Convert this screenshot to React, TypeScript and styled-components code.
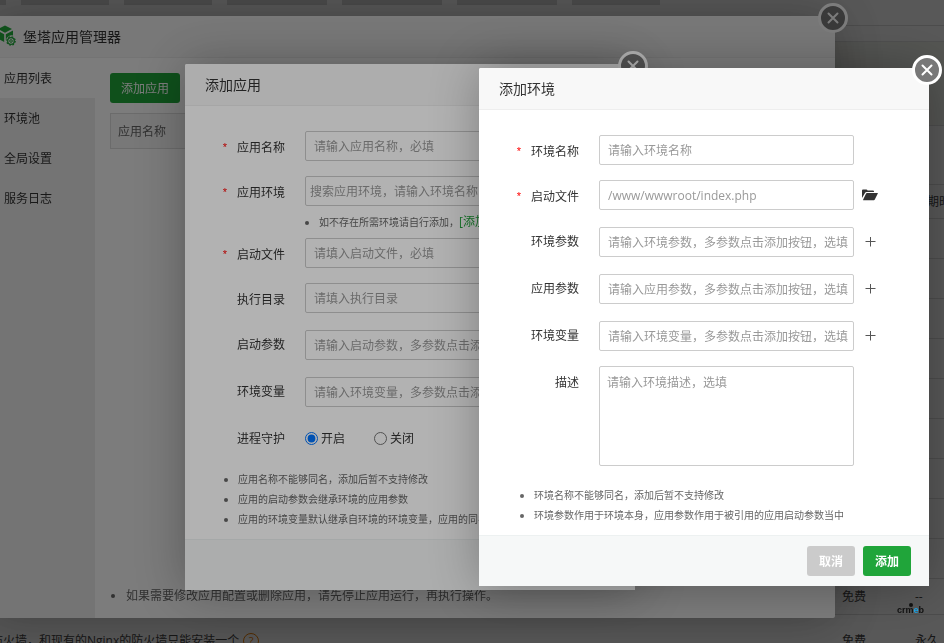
import React from "react";
import styled, { createGlobalStyle, css } from "styled-components";

const Global = createGlobalStyle`
  *, *::before, *::after { box-sizing: border-box; }
  html, body { margin: 0; height: 100%; overflow: hidden; }
  body, button, input, textarea {
    font-family: "Open Sans", "Noto Sans CJK SC", sans-serif;
    font-size: 12px;
  }
  body { color: #333; background: #fff; }
  #root { height: 100%; }
  ul, h2, p { margin: 0; padding: 0; }
`;

/* ---------- software store page, under every dialog ---------- */

const Page = styled.main`
  height: 100vh;
  overflow: hidden;
  display: flex;
  flex-direction: column;
`;

const Tabs = styled.nav`
  display: flex;
  gap: 15px;
  height: 26px;
  flex: none;
  border-bottom: 1px solid #ddd;
`;

const TabStub = styled.span<{ $w: number }>`
  width: ${(p) => p.$w}px;
  height: 5px;
  background: #d8d8d8;
`;

const Gap = styled.div`
  height: 16px;
  flex: none;
  border-bottom: 1px solid #e4e4e4;
`;

const Notice = styled.div`
  height: 84px;
  flex: none;
  background: #f3f5ee;
  border-bottom: 1px solid #ddd;
`;

const Store = styled.table`
  flex: none;
  width: calc(100% + 9px);
  border-collapse: collapse;
  table-layout: fixed;
  margin: 58px 0 0 -9px;
  border-top: 1px solid #ddd;
`;

const StoreRow = styled.tr<{ $h: number }>`
  height: ${(p) => p.$h}px;
  border-bottom: 1px solid #ddd;
`;

const StoreCell = styled.td<{ $w?: number }>`
  padding: 0;
  line-height: 18px;
  color: #444;
  white-space: nowrap;
  ${(p) => p.$w && css`width: ${p.$w}px;`}
`;

const Help = styled.a`
  display: inline-block;
  width: 16px;
  height: 16px;
  margin-left: 4px;
  border: 1px solid #f08000;
  border-radius: 50%;
  color: #f08000;
  font-size: 11px;
  line-height: 14px;
  text-align: center;
  text-decoration: none;
`;

/* ---------- dialogs ---------- */

const Shade = styled.div`
  position: fixed;
  inset: 0;
  background: rgba(0, 0, 0, 0.3);
  overflow: hidden;
`;

const Dialog = styled.section<{ $x: number; $y: number; $w: number }>`
  position: absolute;
  left: ${(p) => p.$x}px;
  top: ${(p) => p.$y}px;
  width: ${(p) => p.$w}px;
  background: #fff;
  border-radius: 2px;
  box-shadow: 1px 1px 50px rgba(0, 0, 0, 0.3);
`;

const DialogTitle = styled.h2<{ $icon?: boolean }>`
  display: flex;
  align-items: center;
  gap: 7px;
  height: 42px;
  padding: 0 20px 2px ${(p) => (p.$icon ? 9 : 20)}px;
  border-bottom: 1px solid #eee;
  border-radius: 2px 2px 0 0;
  background: #f8f8f8;
  font-size: 14px;
  font-weight: 400;
  color: #333;
`;

const CloseButton = styled.button`
  position: absolute;
  top: -13px;
  right: -13px;
  width: 30px;
  height: 30px;
  padding: 0;
  display: grid;
  place-items: center;
  border: 3px solid #fff;
  border-radius: 50%;
  background: #787878;
  cursor: pointer;
`;

const Form = styled.form`
  padding: 25px 0 10px;
`;

const Row = styled.div<{ $h?: number; $low?: boolean }>`
  display: flex;
  align-items: ${(p) => (p.$low ? "flex-end" : "flex-start")};
  height: ${(p) => p.$h ?? 30}px;
  margin-bottom: 15px;
`;

const Label = styled.label`
  display: flex;
  justify-content: flex-end;
  align-items: center;
  flex: none;
  gap: 10px;
  width: 100px;
  height: 32px;
  margin-right: 20px;
  color: #333;
`;

const Star = styled.span`
  color: #f00;
  font-family: "Liberation Sans", sans-serif;
  font-size: 11px;
  line-height: 12px;
`;

const field = css`
  border: 1px solid #ccc;
  border-radius: 2px;
  outline: 0;
  background: #fff;
  color: #333;
  &::placeholder { color: #999; opacity: 1; }
`;

const Input = styled.input<{ $tight?: boolean }>`
  ${field}
  flex: none;
  width: 255px;
  height: 30px;
  padding: 0 4px 0 ${(p) => (p.$tight ? 4 : 8)}px;
`;

const Area = styled.textarea`
  ${field}
  flex: none;
  width: 255px;
  height: 100px;
  padding: 7px;
  line-height: 18px;
  resize: none;
`;

const IconButton = styled.button`
  display: grid;
  place-items: center;
  width: 16px;
  height: 30px;
  margin-left: 8px;
  padding: 0;
  border: 0;
  background: none;
  cursor: pointer;
`;

const InlineHint = styled.ul`
  height: 16px;
  margin: -7px 0 8px 134px;
  font-size: 10px;
  line-height: 16px;
  color: #666;
  white-space: nowrap;
`;

const LinkText = styled.a`
  color: #20a53a;
  font-size: 12px;
  text-decoration: none;
`;

const Choice = styled.label`
  display: flex;
  align-items: center;
  gap: 3px;
  height: 32px;
  margin-right: 29px;
`;

const Radio = styled.input`
  width: 13px;
  height: 13px;
  margin: 0;
`;

const Notes = styled.ul<{ $indent: number }>`
  padding: 4px 0 0 ${(p) => p.$indent}px;
  font-size: 10px;
  line-height: 20px;
  color: #666;
  white-space: nowrap;
`;

const Footer = styled.footer`
  display: flex;
  justify-content: flex-end;
  gap: 8px;
  height: 51px;
  padding: 10px 18px;
  border-top: 1px solid #edf1f1;
  background: #f6f8f8;
`;

const Action = styled.button<{ $muted?: boolean }>`
  width: 48px;
  height: 30px;
  padding: 0;
  border: 0;
  border-radius: 3px;
  background: ${(p) => (p.$muted ? "#cbcbcb" : "#20a53a")};
  color: #fff;
  font-weight: 700;
`;

/* ---------- application manager ---------- */

const Manager = styled.div`
  display: flex;
  height: 560px;
`;

const Side = styled.nav`
  display: flex;
  flex-direction: column;
  width: 110px;
  background: #f0f0f0;
`;

const SideItem = styled.a<{ $on?: boolean }>`
  height: 40px;
  padding-left: 19px;
  line-height: 42px;
  color: #333;
  text-decoration: none;
  background: ${(p) => (p.$on ? "#fff" : "transparent")};
`;

const Content = styled.div`
  flex: 1;
  display: flex;
  flex-direction: column;
  padding: 15px 15px 13px;
`;

const AddApp = styled.button`
  align-self: flex-start;
  width: 70px;
  height: 30px;
  padding: 0;
  border: 0;
  border-radius: 3px;
  background: #20a53a;
  color: #fff;
`;

const AppTable = styled.table`
  width: 100%;
  margin-top: 10px;
  border-collapse: collapse;
  border: 1px solid #ddd;
`;

const AppHead = styled.th`
  height: 35px;
  padding: 0 7px;
  background: #f6f6f6;
  color: #666;
  font-weight: 400;
  text-align: left;
`;

const ManagerNote = styled.ul`
  margin-top: auto;
  padding-left: 16px;
  line-height: 18px;
  color: #666;
`;

const Watermark = styled.div`
  position: fixed;
  right: 20px;
  bottom: 27px;
  color: #111;
  font: 700 9px/12px "Liberation Sans", sans-serif;
`;

const WatermarkAccent = styled.span`
  color: #1ba1e2;
`;

const WatermarkHead = styled.span`
  position: absolute;
  left: 12px;
  top: -1px;
  width: 4px;
  height: 4px;
  border-radius: 50%;
  background: #111;
`;

const Cross = () => (
  <svg width="12" height="12" viewBox="0 0 12 12" fill="none" stroke="#fff" strokeWidth="2" strokeLinecap="round">
    <path d="M1.5 1.5l9 9M10.5 1.5l-9 9" />
  </svg>
);

const Close = ({ label }: { label: string }) => (
  <CloseButton type="button" aria-label={label}>
    <Cross />
  </CloseButton>
);

const Plus = ({ label }: { label: string }) => (
  <IconButton type="button" aria-label={label}>
    <svg width="11" height="11" viewBox="0 0 11 11" stroke="#555" fill="none">
      <path d="M.5 4.500h10M5.500 0v9.500" />
    </svg>
  </IconButton>
);

const Folder = () => (
  <svg width="16" height="12" viewBox="0 0 16 12" fill="#333">
    <path d="M0 9V1.5Q0 .5 1 .5h3.5q.6 0 .8.6l.2.4H11q1 0 1 1V3H4.5q-1 0-1.5.9z" />
    <path d="M5 4h10.5q.6 0 .3.6l-3 6q-.3.6-1 .6H1.5q-.6 0-.3-.6l2.9-6Q4.400 4 5 4z" />
  </svg>
);

const Cube = () => (
  <svg width="22" height="22" viewBox="0 0 22 22">
    <path d="M4 4l7-3.500L18 4l-7 3.700z" fill="#20a53a" />
    <path d="M3 5.500l7.200 3.800V17L3 13.200zM19 5.500v5a6 6 0 00-7.200 5V9.300z" fill="#20a53a" />
    <circle cx="17" cy="16" r="3.300" fill="none" stroke="#20a53a" strokeWidth="1.300" />
    <circle cx="17" cy="16" r="4.200" fill="none" stroke="#20a53a" strokeWidth="1.200" strokeDasharray="1.700 1.600" />
    <circle cx="17" cy="16" r="1.300" fill="none" stroke="#20a53a" />
  </svg>
);

const FieldRow = (p: {
  id: string;
  label: string;
  hint: string;
  required?: boolean;
  tall?: boolean;
  tight?: boolean;
  children?: React.ReactNode;
}) => (
  <Row $h={p.tall ? 32 : 30} $low={p.tall}>
    <Label htmlFor={p.id}>
      {p.required && <Star>*</Star>}
      {p.label}
    </Label>
    <Input id={p.id} placeholder={p.hint} $tight={p.tight} />
    {p.children}
  </Row>
);

const tabWidths = [6, 88, 88, 100, 100, 100, 88];
const rows = [34, 40, 40, 40, 40, 40, 40, 40, 40, 40, 36, 52];

export default function App() {
  return (
    <>
      <Global />
      <Page>
        <Tabs>
          {tabWidths.map((w, i) => <TabStub key={i} $w={w} />)}
        </Tabs>
        <Gap />
        <Notice />
        <Store>
          <tbody>
            {rows.map((h, i) => (
              <StoreRow key={i} $h={h}>
                <StoreCell>
                  {i === 11 && <>防火墙，和现有的Nginx的防火墙只能安装一个<Help href="#help">?</Help></>}
                </StoreCell>
                <StoreCell $w={73}>{i >= 10 ? "免费" : ""}</StoreCell>
                <StoreCell $w={29}>{i === 0 ? "到期时间" : i === 10 ? "--" : i === 11 ? "永久" : ""}</StoreCell>
              </StoreRow>
            ))}
          </tbody>
        </Store>
      </Page>

      <Shade>
        <Dialog $x={-15} $y={16} $w={850}>
          <DialogTitle $icon>
            <Cube />
            堡塔应用管理器
          </DialogTitle>
          <Close label="关闭管理器" />
          <Manager>
            <Side>
              <SideItem href="#apps" $on>应用列表</SideItem>
              <SideItem href="#env">环境池</SideItem>
              <SideItem href="#settings">全局设置</SideItem>
              <SideItem href="#logs">服务日志</SideItem>
            </Side>
            <Content>
              <AddApp type="button">添加应用</AddApp>
              <AppTable>
                <thead>
                  <tr><AppHead>应用名称</AppHead></tr>
                </thead>
              </AppTable>
              <ManagerNote>
                <li>如果需要修改应用配置或删除应用，请先停止应用运行，再执行操作。</li>
              </ManagerNote>
            </Content>
          </Manager>
        </Dialog>
      </Shade>

      <Shade>
        <Dialog $x={185} $y={64} $w={450}>
          <DialogTitle>添加应用</DialogTitle>
          <Close label="关闭添加应用" />
          <Form>
            <FieldRow id="app-name" label="应用名称" hint="请输入应用名称，必填" required />
            <FieldRow id="app-env" label="应用环境" hint="搜索应用环境，请输入环境名称" required tight />
            <InlineHint>
              <li>如不存在所需环境请自行添加，<LinkText href="#add-env">[添加环境]</LinkText></li>
            </InlineHint>
            <FieldRow id="app-file" label="启动文件" hint="请填入启动文件，必填" required />
            <FieldRow id="app-dir" label="执行目录" hint="请填入执行目录" />
            <FieldRow id="app-args" label="启动参数" hint="请输入启动参数，多参数点击添加按钮，选填" tall />
            <FieldRow id="app-vars" label="环境变量" hint="请输入环境变量，多参数点击添加按钮，选填" tall />
            <Row $h={28}>
              <Label as="span">进程守护</Label>
              <Choice><Radio type="radio" name="guard" defaultChecked />开启</Choice>
              <Choice><Radio type="radio" name="guard" />关闭</Choice>
            </Row>
            <Notes $indent={53}>
              <li>应用名称不能够同名，添加后暂不支持修改</li>
              <li>应用的启动参数会继承环境的应用参数</li>
              <li>应用的环境变量默认继承自环境的环境变量，应用的同名变量优先</li>
            </Notes>
          </Form>
          <Footer />
        </Dialog>
      </Shade>

      <Shade>
        <Dialog $x={479} $y={68} $w={450}>
          <DialogTitle>添加环境</DialogTitle>
          <Close label="关闭添加环境" />
          <Form>
            <FieldRow id="env-name" label="环境名称" hint="请输入环境名称" required />
            <FieldRow id="env-file" label="启动文件" hint="/www/wwwroot/index.php" required>
              <IconButton type="button" aria-label="选择文件"><Folder /></IconButton>
            </FieldRow>
            <FieldRow id="env-args" label="环境参数" hint="请输入环境参数，多参数点击添加按钮，选填" tall>
              <Plus label="添加环境参数" />
            </FieldRow>
            <FieldRow id="env-app-args" label="应用参数" hint="请输入应用参数，多参数点击添加按钮，选填" tall>
              <Plus label="添加应用参数" />
            </FieldRow>
            <FieldRow id="env-vars" label="环境变量" hint="请输入环境变量，多参数点击添加按钮，选填" tall>
              <Plus label="添加环境变量" />
            </FieldRow>
            <Row $h={100}>
              <Label htmlFor="env-desc">描述</Label>
              <Area id="env-desc" placeholder="请输入环境描述，选填" />
            </Row>
            <Notes $indent={55}>
              <li>环境名称不能够同名，添加后暂不支持修改</li>
              <li>环境参数作用于环境本身，应用参数作用于被引用的应用启动参数当中</li>
            </Notes>
          </Form>
          <Footer>
            <Action type="button" $muted>取消</Action>
            <Action type="button">添加</Action>
          </Footer>
        </Dialog>
      </Shade>

      <Watermark>
        <WatermarkHead />
        crm<WatermarkAccent>e</WatermarkAccent>b
      </Watermark>
    </>
  );
}
